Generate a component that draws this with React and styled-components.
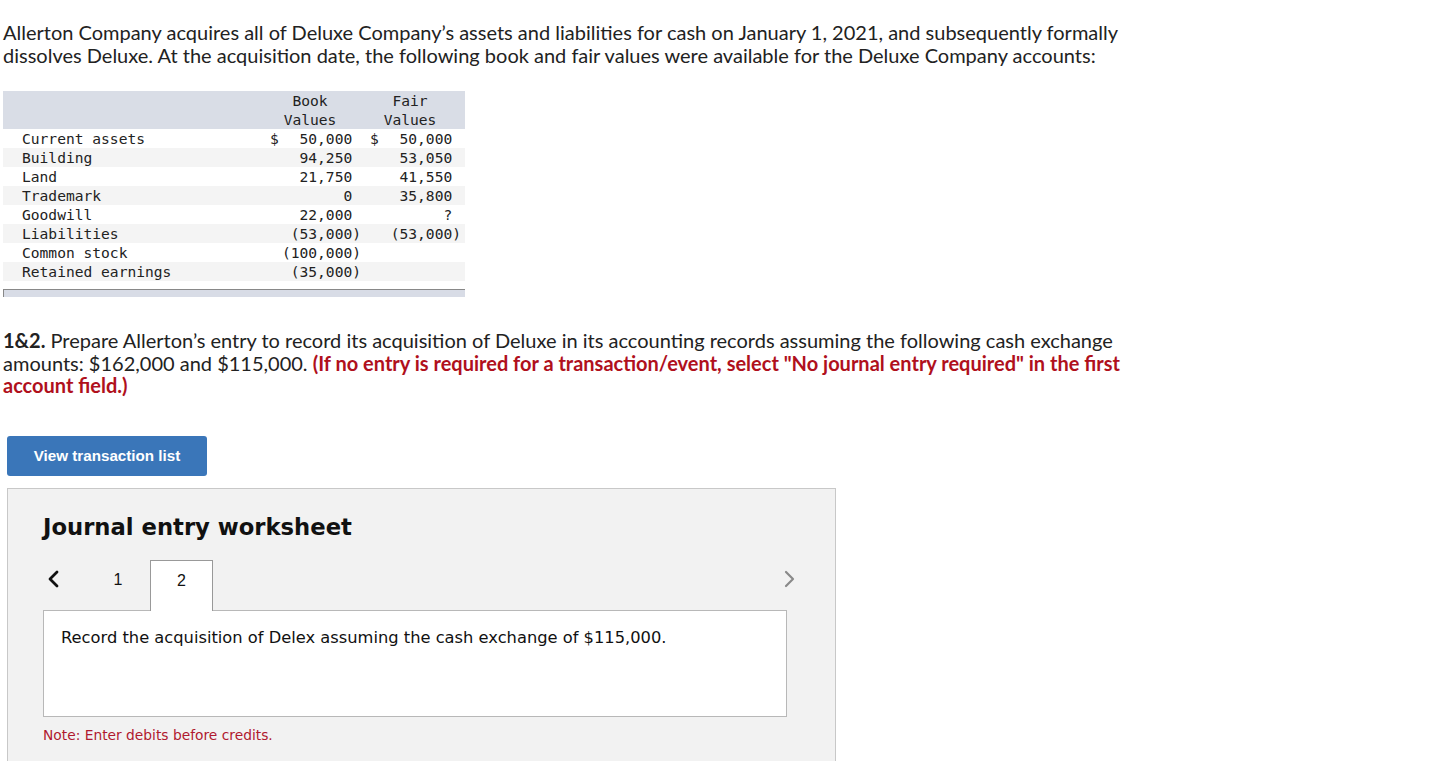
import React from "react";
import styled, { createGlobalStyle } from "styled-components";

const GlobalStyle = createGlobalStyle`
  html, body { margin: 0; padding: 0; background: #fff; }
  body { font-family: "Lato", "Open Sans", sans-serif; color: #222; }
  * { box-sizing: border-box; }
`;

const Page = styled.div`
  width: 1443px;
  height: 761px;
  overflow: hidden;
  padding: 21px 0 0 3px;
`;

const Paragraph = styled.p`
  margin: 0;
  width: 1135px;
  font-family: "Lato", sans-serif;
  font-size: 20px;
  line-height: 22.5px;
  color: #222;
`;

const Table = styled.div`
  margin-top: 25px;
  width: 462px;
  font-family: "DejaVu Sans Mono", "Liberation Mono", monospace;
  font-size: 14.6px;
  color: #222;
`;

const Row = styled.div`
  display: grid;
  grid-template-columns: 262px 100px 100px;
  height: ${(p) => (p.$head ? "38px" : "19px")};
  line-height: 19px;
  background: ${(p) => (p.$head ? "#d9dde6" : p.$stripe ? "#f4f4f4" : "#fff")};
  white-space: pre;
`;

const Label = styled.div`
  padding-left: 19px;
`;

const HeadCell = styled.div`
  text-align: center;
  padding-right: 10px;
`;

const Money = styled.div`
  display: flex;
  justify-content: space-between;
  padding: 0 4px 0 5px;
`;

const ScrollBar = styled.div`
  margin-top: 8px;
  width: 462px;
  height: 8px;
  background: #d8dce6;
  border-top: 1px solid #888;
  border-left: 1px solid #888;
`;

const Question = styled(Paragraph)`
  margin-top: 32px;
`;

const Strong = styled.b`
  font-weight: 700;
  color: #222;
`;

const Red = styled.b`
  font-weight: 700;
  color: #b0101c;
`;

const Button = styled.button`
  display: block;
  margin: 39px 0 0 4px;
  width: 200px;
  height: 40px;
  border: none;
  border-radius: 3px;
  background: #3a76b9;
  color: #fff;
  font-family: "Liberation Sans", Arial, sans-serif;
  font-weight: 700;
  font-size: 15.2px;
  padding: 0;
  cursor: pointer;
`;

const Panel = styled.div`
  margin: 12px 0 0 4px;
  width: 829px;
  height: 300px;
  background: #f2f2f2;
  border: 1px solid #c8c8c8;
  padding: 24px 48px 0 35px;
  font-family: "DejaVu Sans", Verdana, sans-serif;
`;

const Title = styled.h2`
  margin: 0;
  font-family: "DejaVu Sans", Verdana, sans-serif;
  font-weight: 700;
  font-size: 22.7px;
  line-height: 29px;
  color: #111;
`;

const TabBar = styled.div`
  margin-top: 18px;
  display: flex;
  align-items: stretch;
  height: 51px;
  margin-bottom: -1px;
  position: relative;
  z-index: 1;
`;

const Arrow = styled.button`
  background: none;
  border: none;
  padding: 0;
  width: 20px;
  display: flex;
  align-items: center;
  justify-content: center;
  margin-top: -12px;
  margin-left: ${(p) => (p.$right ? "auto" : "0")};
  margin-right: ${(p) => (p.$right ? "-13px" : "0")};
`;

const Tab = styled.div`
  width: ${(p) => (p.$active ? "63px" : "64px")};
  margin-left: ${(p) => (p.$first ? "23px" : "0")};
  display: flex;
  justify-content: center;
  padding-top: 11px;
  font-family: "Liberation Sans", Arial, sans-serif;
  font-size: 16px;
  color: #111;
  background: ${(p) => (p.$active ? "#fff" : "transparent")};
  border: ${(p) => (p.$active ? "1px solid #999" : "none")};
  border-bottom: none;
  text-align: center;
`;

const Box = styled.div`
  height: 107px;
  background: #fff;
  border: 1px solid #b8b8b8;
  padding: 17px 17px;
  font-size: 16.3px;
  line-height: 20px;
  color: #111;
`;

const Note = styled.div`
  margin-top: 10px;
  font-size: 13.8px;
  color: #b0192f;
`;

const Chevron = ({ dir, color, w = 2.6 }) => (
  <svg width="14" height="20" viewBox="0 0 14 20">
    <polyline
      points={dir === "left" ? "11,3 4,10 11,17" : "3,3 10,10 3,17"}
      fill="none"
      stroke={color}
      strokeWidth={w}
      strokeLinecap="round"
      strokeLinejoin="round"
    />
  </svg>
);

const rows = [
  ["Current assets", "50,000 ", "50,000 ", true],
  ["Building", "94,250 ", "53,050 "],
  ["Land", "21,750 ", "41,550 "],
  ["Trademark", "0 ", "35,800 "],
  ["Goodwill", "22,000 ", "? "],
  ["Liabilities", "(53,000)", "(53,000)"],
  ["Common stock", "(100,000)", ""],
  ["Retained earnings", "(35,000)", ""],
];

export default function App() {
  return (
    <>
      <GlobalStyle />
      <Page>
        <Paragraph>
          Allerton Company acquires all of Deluxe Company’s assets and liabilities for cash on January 1, 2021, and
          subsequently formally dissolves Deluxe. At the acquisition date, the following book and fair values were
          available for the Deluxe Company accounts:
        </Paragraph>

        <Table>
          <Row $head>
            <div />
            <HeadCell>{"Book\nValues"}</HeadCell>
            <HeadCell>{"Fair\nValues"}</HeadCell>
          </Row>
          {rows.map(([label, book, fair, dollar], i) => (
            <Row key={label} $stripe={i % 2 === 1}>
              <Label>{label}</Label>
              <Money>
                <span>{dollar ? "$" : ""}</span>
                <span>{book}</span>
              </Money>
              <Money>
                <span>{dollar ? "$" : ""}</span>
                <span>{fair}</span>
              </Money>
            </Row>
          ))}
        </Table>
        <ScrollBar />

        <Question>
          <Strong>1&amp;2.</Strong> Prepare Allerton’s entry to record its acquisition of Deluxe in its accounting
          records assuming the following cash exchange amounts: $162,000 and $115,000.{" "}
          <Red>
            (If no entry is required for a transaction/event, select "No journal entry required" in the first
            account field.)
          </Red>
        </Question>

        <Button>View transaction list</Button>

        <Panel>
          <Title>Journal entry worksheet</Title>
          <TabBar>
            <Arrow aria-label="previous">
              <Chevron dir="left" color="#111" w={2.8} />
            </Arrow>
            <Tab $first>1</Tab>
            <Tab $active>2</Tab>
            <Arrow $right aria-label="next">
              <Chevron dir="right" color="#8a8a8a" w={2.2} />
            </Arrow>
          </TabBar>
          <Box>Record the acquisition of Delex assuming the cash exchange of $115,000.</Box>
          <Note>Note: Enter debits before credits.</Note>
        </Panel>
      </Page>
    </>
  );
}
